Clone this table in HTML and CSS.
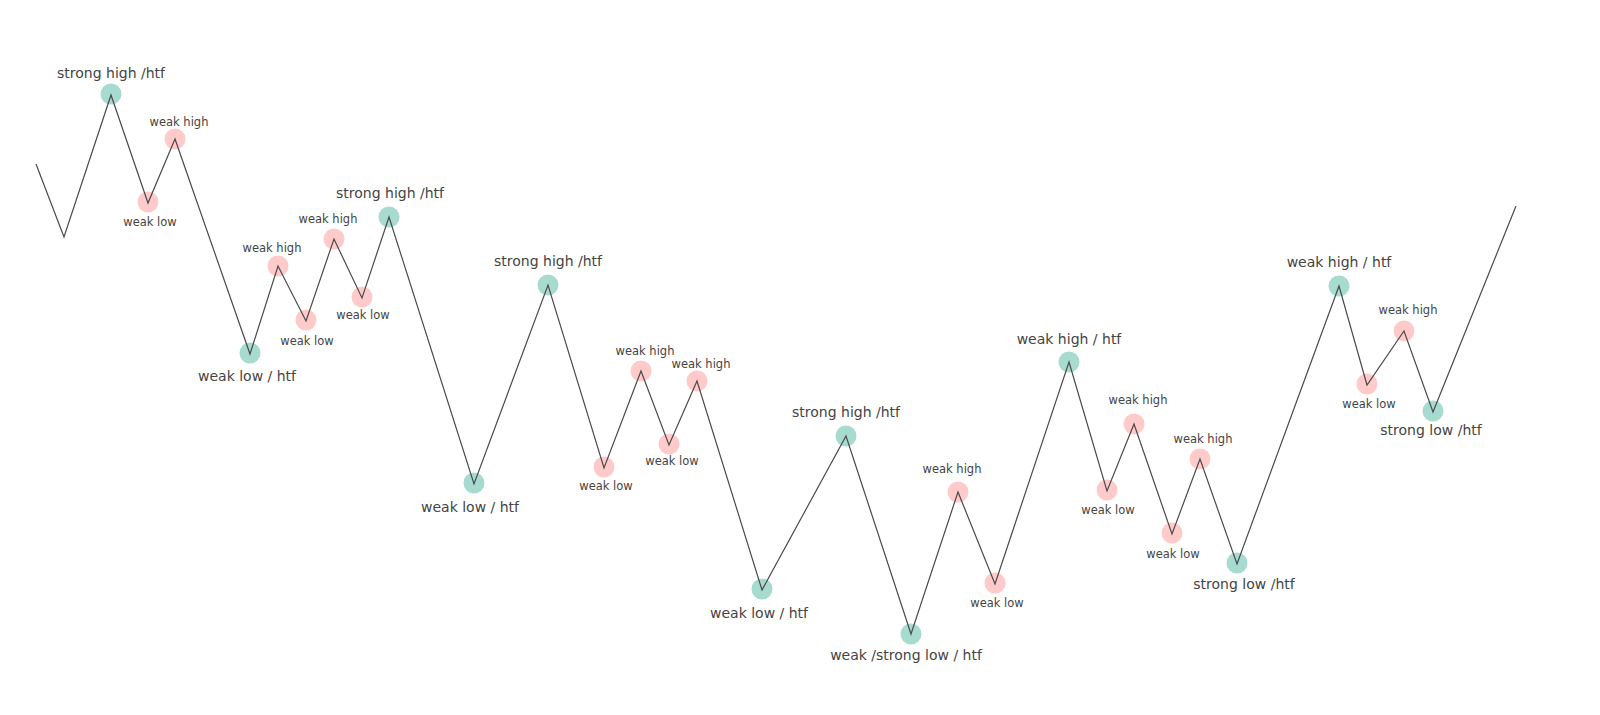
FILE: index.html
```html
<!DOCTYPE html>
<html lang="en">
<head>
<meta charset="utf-8">
<title>Market structure: strong / weak highs and lows</title>
<link rel="stylesheet" href="styles.css">
</head>
<body>
<main class="canvas">
<svg class="chart" width="1600" height="715" viewBox="0 0 1600 715" xmlns="http://www.w3.org/2000/svg">
  <g class="dots">
    <circle class="teal" cx="111" cy="94" r="10.5"/>
    <circle class="pink" cx="148" cy="202" r="10.5"/>
    <circle class="pink" cx="175" cy="139" r="10.5"/>
    <circle class="teal" cx="250" cy="353" r="10.5"/>
    <circle class="pink" cx="278" cy="266" r="10.5"/>
    <circle class="pink" cx="306" cy="320" r="10.5"/>
    <circle class="pink" cx="334" cy="239" r="10.5"/>
    <circle class="pink" cx="362" cy="297" r="10.5"/>
    <circle class="teal" cx="389" cy="217" r="10.5"/>
    <circle class="teal" cx="474" cy="483" r="10.5"/>
    <circle class="teal" cx="548" cy="285" r="10.5"/>
    <circle class="pink" cx="604" cy="467" r="10.5"/>
    <circle class="pink" cx="641" cy="371" r="10.5"/>
    <circle class="pink" cx="669" cy="444" r="10.5"/>
    <circle class="pink" cx="697" cy="381" r="10.5"/>
    <circle class="teal" cx="762" cy="589" r="10.5"/>
    <circle class="teal" cx="846" cy="436" r="10.5"/>
    <circle class="teal" cx="911" cy="634" r="10.5"/>
    <circle class="pink" cx="958" cy="492" r="10.5"/>
    <circle class="pink" cx="995" cy="583" r="10.5"/>
    <circle class="teal" cx="1069" cy="362" r="10.5"/>
    <circle class="pink" cx="1107" cy="490" r="10.5"/>
    <circle class="pink" cx="1134" cy="424" r="10.5"/>
    <circle class="pink" cx="1172" cy="533" r="10.5"/>
    <circle class="pink" cx="1200" cy="459" r="10.5"/>
    <circle class="teal" cx="1237" cy="563" r="10.5"/>
    <circle class="teal" cx="1339" cy="286" r="10.5"/>
    <circle class="pink" cx="1367" cy="384" r="10.5"/>
    <circle class="pink" cx="1404" cy="331" r="10.5"/>
    <circle class="teal" cx="1433" cy="411" r="10.5"/>
  </g>
  <polyline class="line" points="36,164 64,237 111,95 148,203 175,139 250,354 278,266 306,321 334,239 362,298 389,217 474,484 548,285 604,468 641,371 669,445 697,381 762,590 846,436 911,634 958,492 995,584 1069,362 1107,491 1134,424 1172,534 1200,459 1237,564 1339,286 1367,385 1404,331 1433,412 1516,206"/>
  <g class="labels">
    <text class="big" x="111" y="78">strong high /htf</text>
    <text class="small" x="150" y="226">weak low</text>
    <text class="small" x="179" y="126">weak high</text>
    <text class="big" x="247" y="381">weak low / htf</text>
    <text class="small" x="272" y="252">weak high</text>
    <text class="small" x="307" y="345">weak low</text>
    <text class="small" x="328" y="223">weak high</text>
    <text class="small" x="363" y="319">weak low</text>
    <text class="big" x="390" y="198">strong high /htf</text>
    <text class="big" x="470" y="512">weak low / htf</text>
    <text class="big" x="548" y="266">strong high /htf</text>
    <text class="small" x="606" y="490">weak low</text>
    <text class="small" x="645" y="355">weak high</text>
    <text class="small" x="672" y="465">weak low</text>
    <text class="small" x="701" y="368">weak high</text>
    <text class="big" x="759" y="618">weak low / htf</text>
    <text class="big" x="846" y="417">strong high /htf</text>
    <text class="big" x="906" y="660">weak /strong low / htf</text>
    <text class="small" x="952" y="473">weak high</text>
    <text class="small" x="997" y="607">weak low</text>
    <text class="big" x="1069" y="344">weak high / htf</text>
    <text class="small" x="1108" y="514">weak low</text>
    <text class="small" x="1138" y="404">weak high</text>
    <text class="small" x="1173" y="558">weak low</text>
    <text class="small" x="1203" y="443">weak high</text>
    <text class="big" x="1244" y="589">strong low /htf</text>
    <text class="big" x="1339" y="267">weak high / htf</text>
    <text class="small" x="1369" y="408">weak low</text>
    <text class="small" x="1408" y="314">weak high</text>
    <text class="big" x="1431" y="435">strong low /htf</text>
  </g>
</svg>
</main>
</body>
</html>
```

FILE: styles.css
```css
html, body {
  margin: 0;
  padding: 0;
  background: #ffffff;
}

.canvas {
  width: 1600px;
  height: 715px;
  overflow: hidden;
}

.chart {
  display: block;
}

.teal {
  fill: #a7dbd0;
}

.pink {
  fill: #ffcaca;
}

.line {
  fill: none;
  stroke: #4a4a4a;
  stroke-width: 1.2;
  stroke-linejoin: miter;
}

.labels text {
  font-family: "DejaVu Sans", Verdana, sans-serif;
  fill: #444444;
  text-anchor: middle;
}

.big {
  font-size: 14px;
}

.small {
  font-size: 11.5px;
}
```
